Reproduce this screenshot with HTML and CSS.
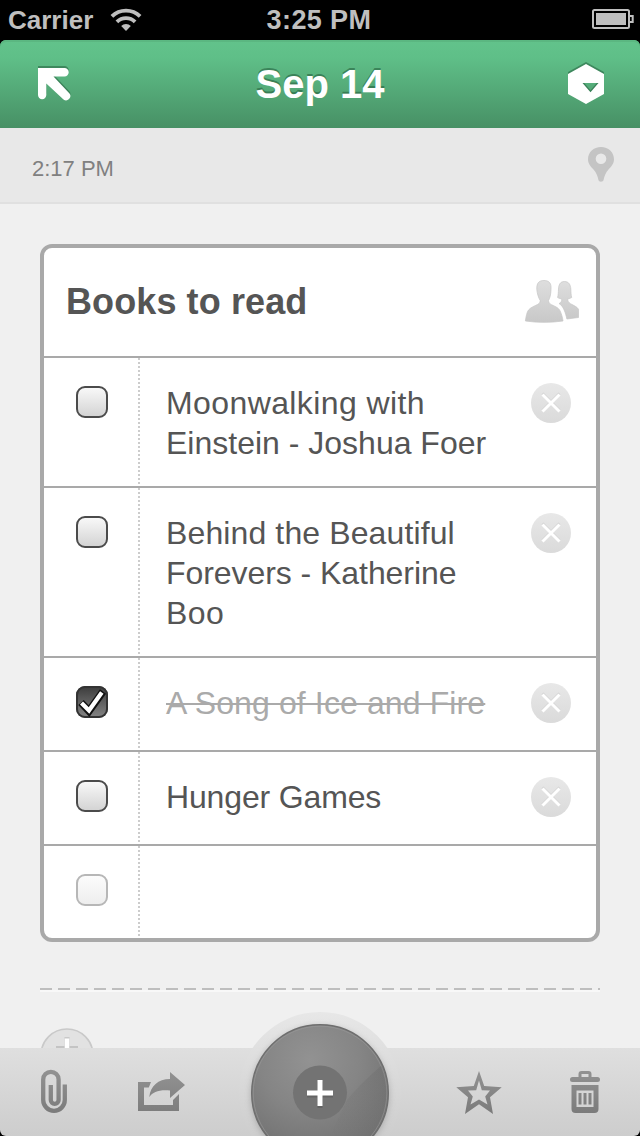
FILE: index.html
```
<!DOCTYPE html>
<html lang="en">
<head>
<meta charset="utf-8">
<title>Sep 14</title>
<link rel="stylesheet" href="styles.css">
</head>
<body>
<svg class="defs" width="0" height="0" aria-hidden="true">
  <defs>
    <linearGradient id="circleGray" x1="0" y1="0" x2="0" y2="1"><stop offset="0" stop-color="#e8e8e8"/><stop offset="1" stop-color="#dadada"/></linearGradient>
    <linearGradient id="peopleGray" x1="0" y1="0" x2="0" y2="1"><stop offset="0" stop-color="#dedede"/><stop offset="1" stop-color="#c8c8c8"/></linearGradient>
    <linearGradient id="toolGray" gradientUnits="userSpaceOnUse" x1="0" y1="0" x2="0" y2="44"><stop offset="0" stop-color="#929292"/><stop offset="1" stop-color="#7b7b7b"/></linearGradient>
    <symbol id="remove" viewBox="0 0 40 40">
      <circle cx="20" cy="20" r="20" fill="url(#circleGray)"/>
      <path d="M11.5 10.500 28.5 27.500M28.5 10.500 11.5 27.500" stroke="#d0d0d0" stroke-width="2.6"/>
      <path d="M11.5 11.500 28.5 28.500M28.5 11.500 11.5 28.500" stroke="#fff" stroke-width="3"/>
    </symbol>
  </defs>
</svg>
<div class="screen">
  <header class="status">
    <div class="status-left">
      <span class="carrier">Carrier</span>
      <svg width="32" height="24" viewBox="0 0 32 24" fill="none" stroke="#bfbfbf" stroke-width="3.8">
        <path d="M1.9 8.4a20 20 0 0 1 28.2 0"/>
        <path d="M6.9 13.8a13 13 0 0 1 18.2 0"/>
        <path d="M16 23l-4.800-5a6.5 6.5 0 0 1 9.600 0z" fill="#bfbfbf" stroke="none"/>
      </svg>
    </div>
    <span class="clock">3:25 PM</span>
    <svg class="battery" width="42" height="20" viewBox="0 0 42 20">
      <rect x="1" y="1" width="36" height="18" rx="1.5" fill="none" stroke="#bfbfbf" stroke-width="2"/>
      <rect x="4" y="4" width="30" height="12" fill="#bfbfbf"/>
      <path d="M38 7h2.7v6H38" fill="none" stroke="#bfbfbf" stroke-width="2"/>
    </svg>
  </header>
  <nav class="navbar">
    <svg class="nav-icon arrow" width="34" height="34" viewBox="0 0 34 34"><path d="M0 0H26.5a4 4 0 0 1 0 8.4H15.500L31.500 25.5a4.3 4.3 0 0 1-6 6L8.3 15.5V27a4.1 4.1 0 0 1-8.3 0z" fill="#fff"/></svg>
    <h1 class="nav-title">Sep 14</h1>
    <svg class="nav-icon" width="36" height="40" viewBox="0 0 36 40"><path fill="#fff" fill-rule="evenodd" d="M18 0 36 10V30L18 40 0 30V10zM14.5 19 22.5 28.3 30.5 19z"/></svg>
  </nav>
  <div class="meta">
    <span class="time">2:17 PM</span>
    <svg class="pin" width="26" height="35" viewBox="0 0 26 35"><path fill="#c4c4c4" fill-rule="evenodd" d="M13 0C20.5 0 26 5.300 26 12.200 26 16.500 23.500 19.300 20.500 22.500 17.500 26 16.200 29.500 15.700 32.500 15.300 35.400 10.700 35.400 10.300 32.500 9.800 29.500 8.500 26 5.500 22.500 2.500 19.300 0 16.500 0 12.200 0 5.300 5.500 0 13 0zM13 6.500a5.300 5.300 0 1 0 0 10.600a5.300 5.300 0 1 0 0-10.600z"/></svg>
  </div>
  <main class="content">
    <section class="card">
      <header class="card-head">
        <h2 class="card-title">Books to read</h2>
        <svg class="people" width="54" height="43" viewBox="0 0 54 43" fill="url(#peopleGray)" stroke="#c6c6c6" stroke-width=".7">
          <path d="M19 .5c5.500 0 7.500 3 7 9-.2 5-1 8.500-2.500 11 .2 2 .8 3.200 3 4.200 5 2.300 7 3.300 8.500 6 1.500 3 2.600 7 3 10.300-12 1.800-26 1.800-37.600 0C1 36 2 32 3.500 30c2-2.500 6-4 9-5.500 2-1 2.500-2 2.700-4C13.500 18 12 13 11.800 9.500 11.500 3.500 13.500 .5 19 .5z"/>
          <path d="M39.500 1.500c4.500 0 6 3.500 6.300 7.500.2 3.500.2 6 .9 8.500-1.500 1-3 1.200-4 1.200 0 2.500.8 3.800 2.800 5 3.500 2 6.500 3 8 5.500v8.300l-11.600 1.500C40.500 33 38.500 26 34 23.500c1.800-.5 2.800-2 2.800-4.700-1.200 0-2.800-.3-4.200-1.300.7-2.500.7-5 .9-8.500.2-4 1.500-7.500 6-7.500z"/>
        </svg>
      </header>
      <ul class="list">
        <li class="row"><span class="check-cell"><i class="box"></i></span><p class="text"><span class="wide">Moonwalking with</span><br>Einstein - Joshua Foer</p><svg class="remove" width="40" height="40"><use href="#remove"/></svg></li>
        <li class="row"><span class="check-cell"><i class="box"></i></span><p class="text"><span class="loose">Behind the Beautiful</span><br><span class="snug">Forevers - Katherine</span><br><span class="wide">Boo</span></p><svg class="remove" width="40" height="40"><use href="#remove"/></svg></li>
        <li class="row"><span class="check-cell"><i class="box checked"><svg width="32" height="32" viewBox="0 0 32 32"><path d="M5 16.500 13 25 27 5.500" fill="none" stroke="#111" stroke-width="7.500"/><path d="M5.500 17 13 24.500 25.800 6.500" fill="none" stroke="#fff" stroke-width="4.200"/></svg></i></span><p class="text done"><span class="loose">A Song of Ice and Fire</span></p><svg class="remove" width="40" height="40"><use href="#remove"/></svg></li>
        <li class="row"><span class="check-cell"><i class="box"></i></span><p class="text single"><span class="tight">Hunger Games</span></p><svg class="remove" width="40" height="40"><use href="#remove"/></svg></li>
        <li class="row"><span class="check-cell"><i class="box faint"></i></span></li>
      </ul>
    </section>
    <div class="dashes"></div>
    <svg class="add-more" width="54" height="20" viewBox="0 0 54 20">
      <circle cx="27" cy="27" r="26" fill="#e2e2e2" stroke="#c9c9c9" stroke-width="1.500"/>
      <path d="M16 19h22" stroke="#c4c4c4" stroke-width="2"/><path d="M27 9v11" stroke="#c9c9c9" stroke-width="5"/><path d="M27 10.500V20" stroke="#fff" stroke-width="4.500"/>
    </svg>
  </main>
  <footer class="toolbar">
    <svg width="27" height="44" viewBox="0 0 27 44" fill="none" stroke="url(#toolGray)" stroke-width="4.300"><path d="M23.800 14.500V30a10.800 10.800 0 0 1-21.600 0V9.500a7.700 7.700 0 0 1 15.400 0V30a3.900 3.900 0 0 1-7.800 0V15"/></svg>
    <svg width="48" height="40" viewBox="0 0 48 40" fill="url(#toolGray)"><path d="M0 10h13l-2.200 5.500H6V33h29v-5l6-6v17H0z"/><path d="M32 0 47 13 32 26V18.500C21 17.500 15 20 11.300 25 12.500 14 20 7 32 7z"/></svg>
    <div class="fab-slot"></div>
    <svg width="46" height="44" viewBox="0 0 46 44"><path fill="url(#toolGray)" fill-rule="evenodd" d="M23 1 28.200 16 45.700 17.300 34 27.300 37 44 23 34.300 9 44 12 27.300 .3 17.300 17.800 16zM23 10.500 20.200 20.300 12 20.500 16.800 26.500 14.500 34.500 23 29.500 31.500 34.500 29.200 26.500 34 20.500 25.800 20.300z"/></svg>
    <svg width="32" height="44" viewBox="0 0 32 44" fill="url(#toolGray)"><path fill-rule="evenodd" d="M9.500 7V4a3 3 0 0 1 3-3h7a3 3 0 0 1 3 3v3H28.500a2.500 2.500 0 0 1 0 5H3.500a2.500 2.500 0 0 1 0-5zM12.500 7h7V4h-7z"/><path fill-rule="evenodd" d="M2.500 15h27v24a4 4 0 0 1-4 4h-19a4 4 0 0 1-4-4zM7.500 20.500v16.500h17V20.500zM9.500 23h3v11.500h-3zM14.500 23h3v11.500h-3zM19.500 23h3v11.500h-3z"/></svg>
    <svg class="fab" width="180" height="136" viewBox="230 1000 180 136">
      <defs>
        <radialGradient id="disc" gradientUnits="userSpaceOnUse" cx="310" cy="1060" r="100"><stop offset="0" stop-color="#929292"/><stop offset=".5" stop-color="#858585"/><stop offset="1" stop-color="#707070"/></radialGradient>
        <linearGradient id="halo" x1="0" y1="0" x2="0" y2="1"><stop offset="0" stop-color="#e7e7e7"/><stop offset=".25" stop-color="#dfdfdf"/><stop offset=".75" stop-color="#cecece"/></linearGradient>
        <linearGradient id="sheen" x1="0" y1="0" x2="0" y2="1"><stop offset="0" stop-color="#555" stop-opacity=".2"/><stop offset="1" stop-color="#555" stop-opacity="0"/></linearGradient>
        <filter id="soft" x="-20%" y="-20%" width="140%" height="140%"><feGaussianBlur stdDeviation="3"/></filter>
        <clipPath id="discClip"><circle cx="320" cy="1093" r="67"/></clipPath>
      </defs>
      <circle cx="320" cy="1093" r="81" fill="url(#halo)"/>
      <circle cx="320" cy="1095" r="69" fill="#888" opacity=".55" filter="url(#soft)"/>
      <circle cx="320" cy="1093" r="68.300" fill="url(#disc)" stroke="#6e6e6e" stroke-width="1.400"/>
      <circle cx="320" cy="1093" r="66.800" fill="none" stroke="#999" stroke-width="1" opacity=".6"/>
      <path d="M394 1055C376 1070 362 1082 347 1100L330 1136H400z" fill="url(#sheen)" clip-path="url(#discClip)"/>
      <circle cx="320" cy="1092.500" r="27" fill="#737373"/>
      <path d="M320 1082v26M307 1095h26" stroke="#555" stroke-width="5" opacity=".5"/>
      <path d="M320 1080v26M307 1093h26" stroke="#fff" stroke-width="5"/>
    </svg>
  </footer>
</div>
</body>
</html>
```
FILE: styles.css
```
* { box-sizing: border-box; }
body, h1, h2, p, ul { margin: 0; padding: 0; }
body { background: #000; font-family: "Liberation Sans", Arial, sans-serif; }
svg { display: block; flex: none; overflow: visible; }
.defs { position: absolute; }
.screen { width: 640px; height: 1136px; display: flex; flex-direction: column; overflow: hidden; background: #000; }

.status { height: 40px; flex: none; display: grid; grid-template-columns: 1fr auto 1fr; align-items: center; padding: 0 7px 0 8px; color: #bfbfbf; font-weight: bold; font-size: 27px; line-height: 40px; }
.status-left { display: flex; align-items: center; gap: 17px; }
.carrier { font-size: 26px; }
.clock { letter-spacing: .4px; margin-right: 3px; }
.battery { justify-self: end; margin: -2px -1px 0 0; }

.navbar { height: 88px; flex: none; display: flex; align-items: center; justify-content: space-between; padding: 0 36px 0 38px; border-radius: 6px 6px 0 0; background: linear-gradient(#62c38b 0, #5fbf88 20%, #479065 100%); box-shadow: inset 0 2px 0 #5bb781; }
.nav-icon { filter: drop-shadow(0 -2px 0 rgba(32, 88, 55, .5)); }
.arrow { margin-top: 2px; }
.nav-title { font-size: 40px; line-height: 88px; color: #fff; text-shadow: 0 -2px 0 rgba(32, 88, 55, .55); }

.meta { height: 76px; flex: none; display: flex; justify-content: space-between; padding: 19px 26px 0 32px; background: #e8e8e8; border-bottom: 2px solid #e0e0e0; }
.time { font-size: 22px; line-height: 43px; color: #808080; }

.content { height: 844px; flex: none; padding: 40px 40px 0; background: #f0f0f0; }
.card { border: 4px solid #a9a9a9; border-radius: 12px; background: #fff; color: #555; }
.card-head { height: 108px; display: flex; align-items: center; justify-content: space-between; padding: 0 17px 0 22px; }
.card-title { font-size: 36px; line-height: 108px; letter-spacing: .1px; }
.people { margin-top: -2px; }
.list { list-style: none; }
.row { display: flex; min-height: 94px; border-top: 2px solid #a9a9a9; }
.check-cell { width: 96px; flex: none; padding: 28px 0 0 32px; background: repeating-linear-gradient(#ccc 0 2px, #fff 2px 4px) right / 2px 100% no-repeat; }
.box { display: block; width: 32px; height: 32px; border: 2px solid #4b4b4b; border-radius: 9px; background: linear-gradient(#f8f8f8, #d4d4d4); }
.faint { border-color: #b7b7b7; background: linear-gradient(#fcfcfc, #eee); }
.checked { border: 0; background: linear-gradient(#3b3b3b, #858585); box-shadow: inset 0 0 0 2px #333; }
.checked svg { clip-path: inset(0 round 9px); }
.text { flex: 1; padding: 25px 0 23px 26px; font-size: 32px; line-height: 40px; white-space: nowrap; }
.wide { letter-spacing: .4px; }
.loose { letter-spacing: .12px; }
.snug { letter-spacing: -.06px; }
.tight { letter-spacing: -.15px; }
.done { padding-bottom: 0; color: #aaa; text-decoration: line-through; text-decoration-thickness: 2px; }
.single { padding-bottom: 0; }
.remove { margin: 25px 25px 0 0; }
.dashes { height: 2px; margin-top: 46px; background: repeating-linear-gradient(90deg, #bebebe 0 12px, transparent 12px 18px); box-shadow: 0 2px 0 #f8f8f8; }
.add-more { margin-top: 38px; overflow: hidden; }

.toolbar { position: relative; height: 88px; flex: none; display: flex; align-items: center; padding: 0 39px 0 41px; background: linear-gradient(#dfdfdf, #cdcdcd); border-radius: 0 0 6px 6px; }
.toolbar > svg:nth-child(2) { margin-left: 70px; }
.fab-slot { flex: 1; }
.toolbar > svg:nth-child(5) { margin-left: 67px; }
.fab { position: absolute; left: 230px; bottom: 0; overflow: hidden; }
```
